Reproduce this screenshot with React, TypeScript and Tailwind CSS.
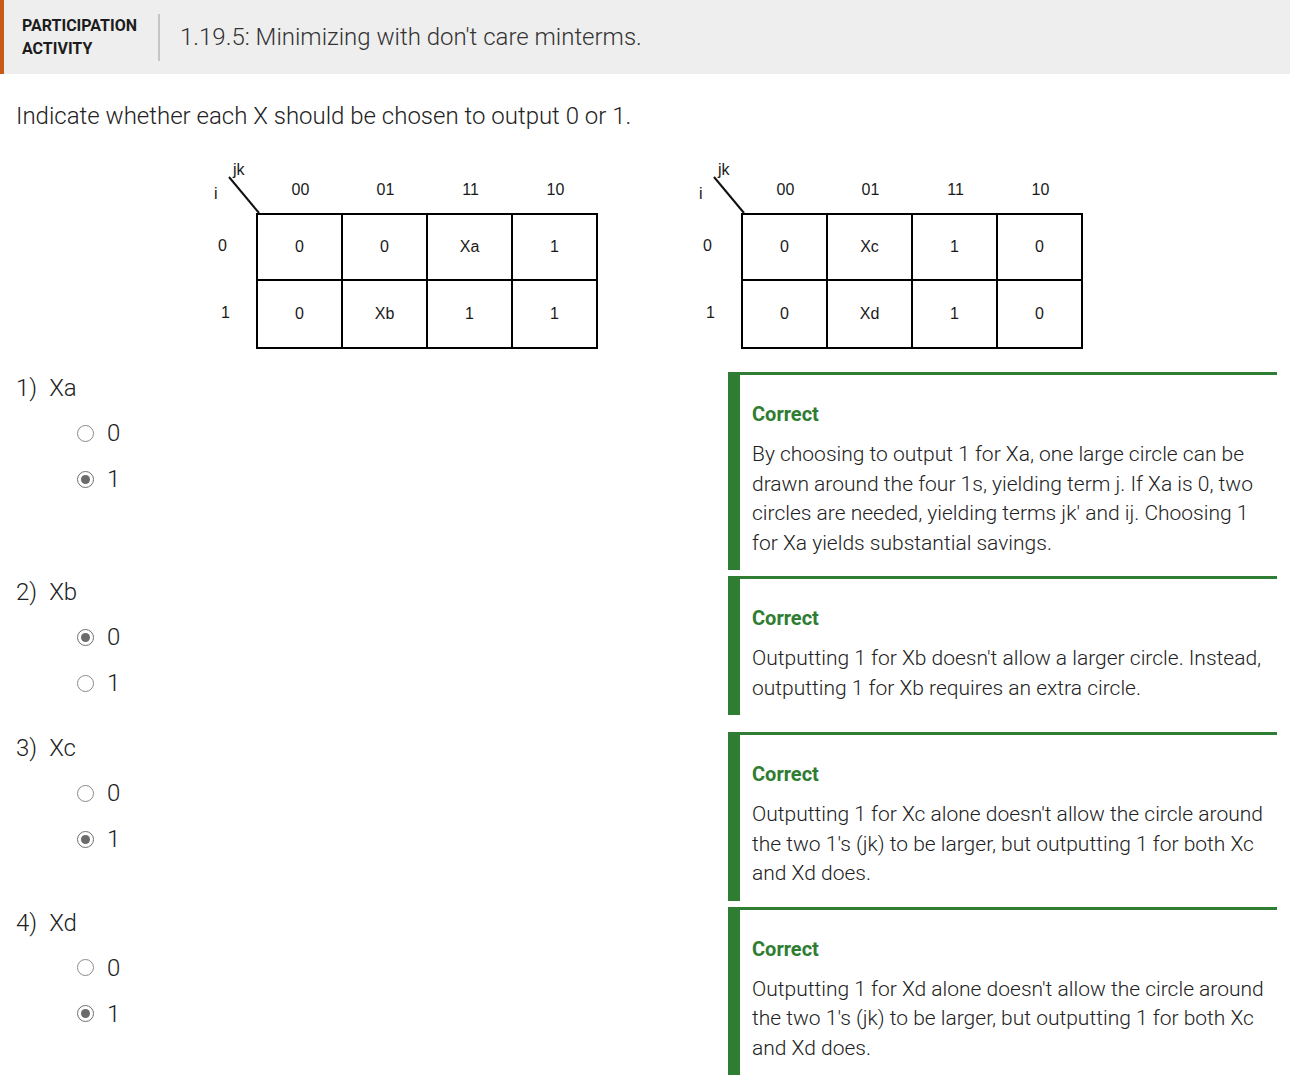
import React from "react";

type Fila = string[];

function KMapa({ celdas }: { celdas: Fila[] }) {
  const columnas = ["00", "01", "11", "10"];
  return (
    <div className="relative w-[388px] font-['Liberation_Sans',Arial,sans-serif] text-[16px] text-[#1a1a1a]">
      {/* esquina con la diagonal */}
      <svg className="absolute left-0 top-0" width="60" height="56" viewBox="0 0 60 56">
        <line x1="19" y1="17" x2="49" y2="53" stroke="#111" strokeWidth="2" />
      </svg>
      <span className="absolute left-[23px] top-[1px] leading-[18px]">jk</span>
      <span className="absolute left-[4px] top-[25px] leading-[18px]">i</span>
      <div className="flex h-[53px] items-start pl-[48px] pt-[21px]">
        {columnas.map((c) => (
          <div key={c} className="w-[85px] text-center leading-[18px]">
            {c}
          </div>
        ))}
      </div>
      <div className="flex">
        <div className="flex w-[48px] flex-col">
          <div className="flex h-[66px] items-center pl-[8px]">0</div>
          <div className="flex h-[68px] items-center pl-[11px]">1</div>
        </div>
        <div className="flex flex-col border-l-2 border-t-2 border-black">
          {celdas.map((fila, i) => (
            <div key={i} className="flex">
              {fila.map((v, j) => (
                <div
                  key={j}
                  className={
                    "flex w-[85px] items-center justify-center border-b-2 border-r-2 border-black " +
                    (i === 0 ? "h-[66px]" : "h-[68px]")
                  }
                >
                  {v}
                </div>
              ))}
            </div>
          ))}
        </div>
      </div>
    </div>
  );
}

function Radio({ valor, marcado }: { valor: string; marcado: boolean }) {
  return (
    <div className="flex h-[32px] items-center">
      <span
        className={
          "ml-[61px] flex h-[17px] w-[17px] items-center justify-center rounded-full border-[1.5px] bg-white " +
          (marcado ? "border-[#6f6f6f]" : "border-[#8a8a8a]")
        }
      >
        {marcado && <span className="h-[9px] w-[9px] rounded-full bg-[#6b6b6b]" />}
      </span>
      <span className="ml-[13px] text-[24px] font-light leading-[32px]">{valor}</span>
    </div>
  );
}

interface Pregunta {
  n: number;
  x: string;
  elegido: string;
  texto: string;
}

const preguntas: Pregunta[] = [
  {
    n: 1,
    x: "Xa",
    elegido: "1",
    texto:
      "By choosing to output 1 for Xa, one large circle can be drawn around the four 1s, yielding term j. If Xa is 0, two circles are needed, yielding terms jk' and ij. Choosing 1 for Xa yields substantial savings.",
  },
  {
    n: 2,
    x: "Xb",
    elegido: "0",
    texto:
      "Outputting 1 for Xb doesn't allow a larger circle. Instead, outputting 1 for Xb requires an extra circle.",
  },
  {
    n: 3,
    x: "Xc",
    elegido: "1",
    texto:
      "Outputting 1 for Xc alone doesn't allow the circle around the two 1's (jk) to be larger, but outputting 1 for both Xc and Xd does.",
  },
  {
    n: 4,
    x: "Xd",
    elegido: "1",
    texto:
      "Outputting 1 for Xd alone doesn't allow the circle around the two 1's (jk) to be larger, but outputting 1 for both Xc and Xd does.",
  },
];

export default function App() {
  return (
    <div className="min-h-[1082px] w-[1290px] bg-white font-['Roboto','Noto_Sans',sans-serif] text-[#222]">
      <header className="flex h-[74px] items-center border-l-4 border-[#c85a19] bg-[#eeeeee]">
        <div className="w-[154px] pl-[18px] text-[16px] font-bold leading-[23px] text-[#1c1c1c]">
          PARTICIPATION
          <br />
          ACTIVITY
        </div>
        <div className="h-[47px] w-[2px] bg-[#c6c6c6]" />
        <h1 className="pl-[20px] text-[24px] font-light text-[#333]">
          1.19.5: Minimizing with don't care minterms.
        </h1>
      </header>

      <p className="px-4 pt-[26px] text-[24px] font-light leading-[32px] text-[#222]">
        Indicate whether each X should be chosen to output 0 or 1.
      </p>

      <div className="mt-[28px] flex gap-[97px] pl-[210px]">
        <KMapa
          celdas={[
            ["0", "0", "Xa", "1"],
            ["0", "Xb", "1", "1"],
          ]}
        />
        <KMapa
          celdas={[
            ["0", "Xc", "1", "0"],
            ["0", "Xd", "1", "0"],
          ]}
        />
      </div>

      <div className="mt-[23px] flex flex-col gap-[6px] pr-[13px]">
        {preguntas.map((p) => (
          <div key={p.n} className="flex items-start">
            <div className="min-h-[150px] flex-1 pl-4">
              <div className="flex h-[32px] items-center gap-[12px] text-[24px] font-light leading-[32px]">
                <span>{p.n})</span>
                <span>{p.x}</span>
              </div>
              <div className="flex flex-col gap-[14px] pt-[13px]">
                <Radio valor="0" marcado={p.elegido === "0"} />
                <Radio valor="1" marcado={p.elegido === "1"} />
              </div>
            </div>
            <div className="w-[549px] border-l-[12px] border-t-[3px] border-[#2e7d32] pb-[12px] pl-[12px] pr-[12px] pt-[24px]">
              <div className="text-[20px] font-bold leading-[30px] text-[#2e7d32]">Correct</div>
              <p className="mt-[11px] text-[21px] font-light leading-[29.5px] text-[#222]">{p.texto}</p>
            </div>
          </div>
        ))}
      </div>
    </div>
  );
}
